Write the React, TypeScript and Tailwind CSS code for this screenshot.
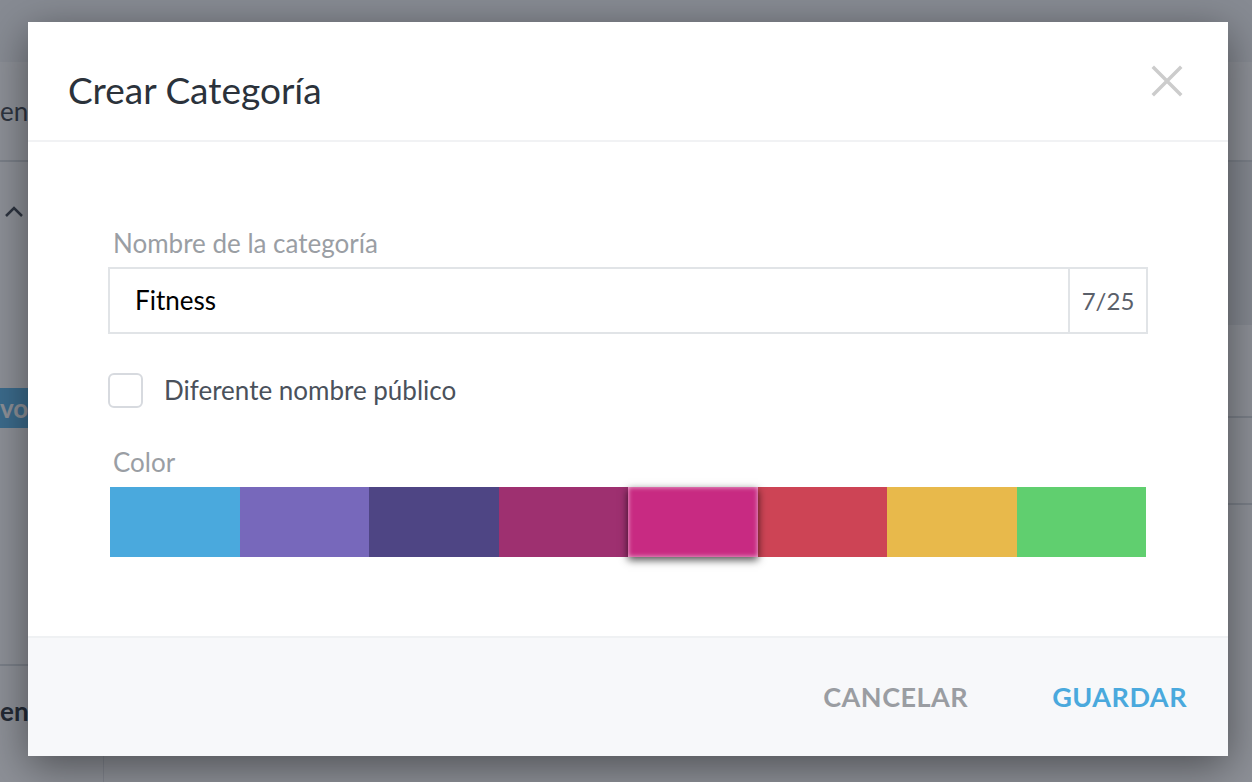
import React from 'react';

const swatches = ['#4aa9dd', '#7768bb', '#4e4584', '#9e3070', '#c82a82', '#cd4455', '#e8b94b', '#60cf6f'];

const font = { fontFamily: '"Lato", "Noto Sans", sans-serif' };

const Background: React.FC = () => (
  <div className="flex h-[782px] w-[1252px] flex-col bg-white">
    <div className="h-[62px] bg-[#f3f4f6]" />
    <div className="flex flex-1">
      <div className="flex w-[104px] flex-col border-r border-[#e5e7eb]">
        <div className="flex h-[100px] items-center border-b-2 border-[#d9dce0] text-[26px] text-[#3f4650]">
          <span>en</span>
        </div>
        <div className="flex h-[100px] items-start pt-[44px] pl-[4px] text-[#3f4650]">
          <svg width="20" height="12" viewBox="0 0 20 12" fill="none" stroke="currentColor" strokeWidth="2.5">
            <path d="M2 10l8-8 8 8" />
          </svg>
        </div>
        <div className="mt-[126px] flex h-[40px] items-center bg-[#5bb5e8] text-[26px] font-bold text-white">
          <span>vo</span>
        </div>
        <div className="flex-1" />
        <div className="flex h-[92px] items-center border-t-2 border-[#d9dce0] text-[26px] font-bold text-[#2b323b]">
          <span>ent</span>
        </div>
        <div className="h-[26px]" />
      </div>
      <div className="flex-1" />
      <div className="flex w-[30px] flex-col">
        <div className="h-[100px] border-b-2 border-[#d9dce0]" />
        <div className="h-[163px] bg-[#eceef1]" />
        <div className="h-[93px] border-b-2 border-[#d9dce0]" />
        <div className="h-[87px] border-b-2 border-[#d9dce0]" />
      </div>
    </div>
  </div>
);

const App: React.FC = () => {
  const selected = 4;
  return (
    <div className="relative h-[782px] w-[1252px] overflow-hidden" style={font}>
      <Background />
      <div className="absolute inset-0 bg-[#1c2230]/50" />
      <div className="absolute left-[28px] top-[22px] flex h-[734px] w-[1200px] flex-col bg-white shadow-[0_10px_40px_rgba(0,0,0,0.45)]">
        <div className="flex h-[120px] items-center justify-between border-b-2 border-[#f1f2f4] pl-[40px] pr-[44px]">
          <h2 className="pt-[18px] text-[37px] text-[#2b323b]">Crear Categoría</h2>
          <svg width="34" height="34" viewBox="0 0 34 34" stroke="#cccccc" strokeWidth="3.5" strokeLinecap="square">
            <path d="M4 4l26 26M30 4L4 30" />
          </svg>
        </div>
        <div className="flex flex-1 flex-col px-[80px] pt-[86px]">
          <label className="pl-[5px] text-[26px] leading-[30px] text-[#9a9ea4]">Nombre de la categoría</label>
          <div className="mt-[9px] flex h-[67px] border-2 border-[#e1e4e7]">
            <div className="flex flex-1 items-center pl-[25px] text-[26px] text-black">Fitness</div>
            <div className="flex w-[78px] items-center justify-center border-l-2 border-[#e1e4e7] text-[24px] text-[#5a606a]">7/25</div>
          </div>
          <div className="mt-[37px] flex items-center gap-[21px]">
            <div className="h-[35px] w-[35px] rounded-[6px] border-2 border-[#d7dadf] bg-white" />
            <span className="text-[26px] text-[#4a515b]">Diferente nombre público</span>
          </div>
          <label className="mt-[37px] pl-[5px] text-[26px] leading-[30px] text-[#9a9ea4]">Color</label>
          <div className="mt-[10px] flex h-[70px] px-[2px]">
            {swatches.map((c, i) => (
              <div
                key={c}
                className={
                  i === selected
                    ? 'relative z-10 flex-1 shadow-[0_3px_8px_rgba(0,0,0,0.7),inset_0_0_5px_rgba(255,255,255,0.7)]'
                    : 'flex-1'
                }
                style={{ backgroundColor: c }}
              />
            ))}
          </div>
        </div>
        <div className="flex h-[120px] items-center justify-end gap-[84px] border-t-2 border-[#eff1f3] bg-[#f7f8fa] pr-[41px]">
          <button className="text-[27px] font-bold tracking-[0.5px] text-[#9a9da2]">CANCELAR</button>
          <button className="text-[27px] font-bold tracking-[0.5px] text-[#4aa9dd]">GUARDAR</button>
        </div>
      </div>
    </div>
  );
};

export default App;
